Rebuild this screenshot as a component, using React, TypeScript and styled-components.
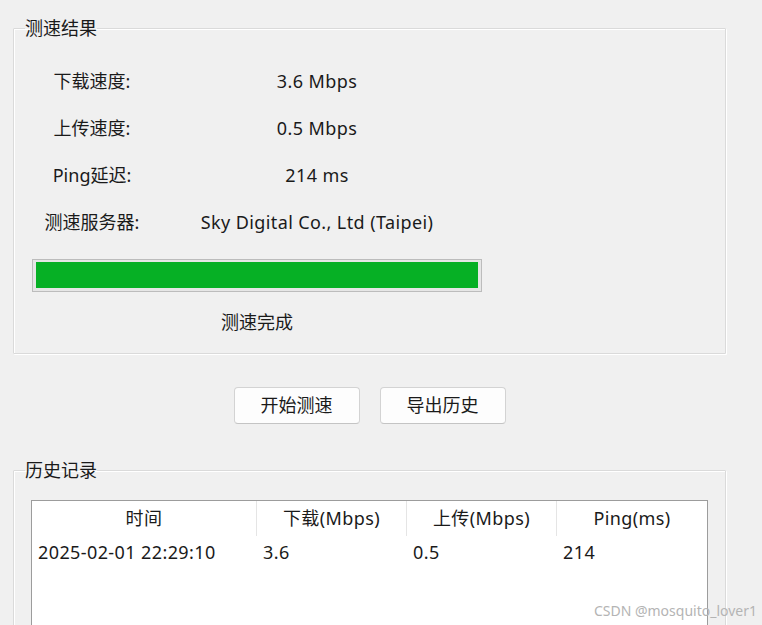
import React from "react";
import styled, { createGlobalStyle } from "styled-components";

const Global = createGlobalStyle`
  html, body {
    margin: 0;
    padding: 0;
    height: 625px;
    overflow: hidden;
    background: #f0f0f0;
  }
  body {
    font-family: "Noto Sans", "Noto Sans CJK SC", sans-serif;
    color: #1a1a1a;
    font-size: 18px;
  }
  * { box-sizing: border-box; }
`;

const Page = styled.div`
  position: relative;
  width: 762px;
  height: 625px;
  padding: 16px 0 0 13px;
  display: flex;
  flex-direction: column;
`;

const Group = styled.fieldset`
  margin: 0;
  padding: 0;
  width: 713px;
  min-width: 0;
  border: 1px solid #dadada;
  box-shadow: 1px 1px 0 #ffffff, inset 1px 1px 0 #ffffff;
  border-radius: 1px;
`;

const Legend = styled.legend`
  margin-left: 11px;
  padding: 0;
  font-size: 18px;
  line-height: 24px;
  height: 24px;
  color: #1a1a1a;
`;

const ResultBody = styled.div`
  padding: 29px 0 19px 18px;
  display: flex;
  flex-direction: column;
  width: 468px;
`;

const InfoGrid = styled.div`
  display: grid;
  grid-template-columns: 120px 330px;
  row-gap: 23px;
  width: 450px;
`;

const Label = styled.div`
  text-align: center;
  line-height: 24px;
  white-space: nowrap;
`;

const Value = styled.div`
  text-align: center;
  line-height: 24px;
  white-space: nowrap;
  letter-spacing: 0.4px;
`;

const Progress = styled.div`
  margin-top: 25px;
  width: 450px;
  height: 33px;
  border: 1px solid #bcbcbc;
  background: #e6e6e6;
  padding: 2px 3px 3px 3px;
`;

const ProgressFill = styled.div`
  height: 100%;
  background: #06b025;
`;

const Status = styled.div`
  margin-top: 18px;
  width: 450px;
  text-align: center;
  line-height: 24px;
`;

const ButtonRow = styled.div`
  width: 713px;
  display: flex;
  justify-content: center;
  gap: 20px;
  margin-top: 33px;
  margin-bottom: 34px;
`;

const Button = styled.button`
  width: 126px;
  height: 37px;
  background: #fdfdfd;
  border: 1px solid #d3d3d3;
  border-bottom-color: #c4c4c4;
  border-radius: 4px;
  font-family: "Noto Sans", "Noto Sans CJK SC", sans-serif;
  font-size: 18px;
  color: #1a1a1a;
  padding: 0;
  line-height: 35px;
`;

const HistoryBody = styled.div`
  padding: 18px 0 0 17px;
`;

const Table = styled.div`
  width: 677px;
  height: 150px;
  background: #ffffff;
  border: 1px solid #9c9c9c;
`;

const Row = styled.div`
  display: grid;
  grid-template-columns: 225px 150px 150px 150px;
`;

const HeadCell = styled.div<{ $last?: boolean }>`
  height: 35px;
  line-height: 35px;
  text-align: center;
  border-right: ${(p) => (p.$last ? "none" : "1px solid #e5e5e5")};
  white-space: nowrap;
  letter-spacing: 0.4px;
`;

const Cell = styled.div`
  height: 32px;
  line-height: 32px;
  padding-left: 6px;
  white-space: nowrap;
  letter-spacing: 0.4px;
`;

const Watermark = styled.div`
  position: absolute;
  right: 5px;
  bottom: 5px;
  font-size: 14px;
  color: #b4b4b4;
  font-family: "Noto Sans", "Noto Sans CJK SC", sans-serif;
`;

const info = [
  ["下载速度:", "3.6 Mbps"],
  ["上传速度:", "0.5 Mbps"],
  ["Ping延迟:", "214 ms"],
  ["测速服务器:", "Sky Digital Co., Ltd (Taipei)"],
];

const headers = ["时间", "下载(Mbps)", "上传(Mbps)", "Ping(ms)"];
const rows = [["2025-02-01 22:29:10", "3.6", "0.5", "214"]];

export default function App() {
  const progress = 100;
  return (
    <>
      <Global />
      <Page>
        <Group>
          <Legend>测速结果</Legend>
          <ResultBody>
            <InfoGrid>
              {info.map(([l, v]) => (
                <React.Fragment key={l}>
                  <Label>{l}</Label>
                  <Value>{v}</Value>
                </React.Fragment>
              ))}
            </InfoGrid>
            <Progress>
              <ProgressFill style={{ width: `${progress}%` }} />
            </Progress>
            <Status>测速完成</Status>
          </ResultBody>
        </Group>
        <ButtonRow>
          <Button>开始测速</Button>
          <Button>导出历史</Button>
        </ButtonRow>
        <Group>
          <Legend>历史记录</Legend>
          <HistoryBody>
            <Table>
              <Row>
                {headers.map((h, i) => (
                  <HeadCell key={h} $last={i === headers.length - 1}>
                    {h}
                  </HeadCell>
                ))}
              </Row>
              {rows.map((r, i) => (
                <Row key={i}>
                  {r.map((c, j) => (
                    <Cell key={j}>{c}</Cell>
                  ))}
                </Row>
              ))}
            </Table>
          </HistoryBody>
        </Group>
        <Watermark>CSDN @mosquito_lover1</Watermark>
      </Page>
    </>
  );
}
